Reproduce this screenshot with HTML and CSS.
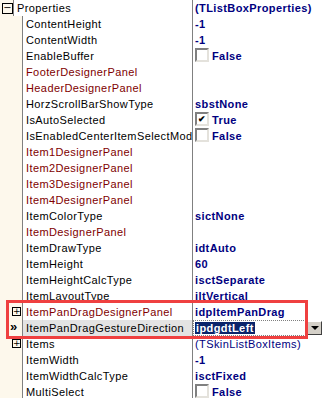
FILE: index.html
```html
<!DOCTYPE html>
<html lang="en">
<head>
    <meta charset="UTF-8">
    <title>Object Inspector</title>
    <link rel="stylesheet" href="styles.css">
</head>
<body>

<div class="inspector">
    <div class="row">
        <div class="gutter top">
            <span class="box big">&minus;</span>
        </div>
        <div class="name first">Properties</div>
        <div class="value">(TListBoxProperties)</div>
    </div>
    <div class="row"><div class="gutter"></div><div class="name">ContentHeight</div><div class="value">-1</div></div>
    <div class="row"><div class="gutter"></div><div class="name">ContentWidth</div><div class="value">-1</div></div>
    <div class="row"><div class="gutter"></div><div class="name">EnableBuffer</div><div class="value"><span class="check"></span>False</div></div>
    <div class="row"><div class="gutter"></div><div class="name ref">FooterDesignerPanel</div><div class="value"></div></div>
    <div class="row"><div class="gutter"></div><div class="name ref">HeaderDesignerPanel</div><div class="value"></div></div>
    <div class="row"><div class="gutter"></div><div class="name">HorzScrollBarShowType</div><div class="value">sbstNone</div></div>
    <div class="row"><div class="gutter"></div><div class="name">IsAutoSelected</div><div class="value"><span class="check on">&#10004;</span>True</div></div>
    <div class="row"><div class="gutter"></div><div class="name">IsEnabledCenterItemSelectMode</div><div class="value"><span class="check"></span>False</div></div>
    <div class="row"><div class="gutter"></div><div class="name ref">Item1DesignerPanel</div><div class="value"></div></div>
    <div class="row"><div class="gutter"></div><div class="name ref">Item2DesignerPanel</div><div class="value"></div></div>
    <div class="row"><div class="gutter"></div><div class="name ref">Item3DesignerPanel</div><div class="value"></div></div>
    <div class="row"><div class="gutter"></div><div class="name ref">Item4DesignerPanel</div><div class="value"></div></div>
    <div class="row"><div class="gutter"></div><div class="name">ItemColorType</div><div class="value">sictNone</div></div>
    <div class="row"><div class="gutter"></div><div class="name ref">ItemDesignerPanel</div><div class="value"></div></div>
    <div class="row"><div class="gutter"></div><div class="name">ItemDrawType</div><div class="value">idtAuto</div></div>
    <div class="row"><div class="gutter"></div><div class="name">ItemHeight</div><div class="value">60</div></div>
    <div class="row"><div class="gutter"></div><div class="name">ItemHeightCalcType</div><div class="value">isctSeparate</div></div>
    <div class="row"><div class="gutter"></div><div class="name">ItemLayoutType</div><div class="value">iltVertical</div></div>
    <div class="row"><div class="gutter"><span class="box">+</span></div><div class="name ref">ItemPanDragDesignerPanel</div><div class="value">idpItemPanDrag</div></div>
    <div class="row selected">
        <div class="gutter"><span class="arrow">&raquo;</span></div>
        <div class="name">ItemPanDragGestureDirection</div>
        <div class="value editing">
            <span class="editor"><span class="sel">ipdgdtLeft</span></span>
            <span class="drop"></span>
        </div>
    </div>
    <div class="row"><div class="gutter"><span class="box">+</span></div><div class="name">Items</div><div class="value plain">(TSkinListBoxItems)</div></div>
    <div class="row"><div class="gutter"></div><div class="name">ItemWidth</div><div class="value">-1</div></div>
    <div class="row"><div class="gutter"></div><div class="name">ItemWidthCalcType</div><div class="value">isctFixed</div></div>
    <div class="row"><div class="gutter"></div><div class="name">MultiSelect</div><div class="value"><span class="check"></span>False</div></div>

    <div class="highlight"></div>
</div>

</body>
</html>
```

FILE: styles.css
```css
body {
    margin: 0;
    background-color: #fff;
    font-family: "Liberation Sans", Arial, sans-serif;
    font-size: 11px;
    letter-spacing: 0.4px;
}

.inspector {
    position: relative;
    width: 326px;
    height: 398px;
    overflow: hidden;
}

.row {
    display: flex;
    height: 16px;
    line-height: 16px;
}

.gutter {
    position: relative;
    width: 22px;
    flex-shrink: 0;
    background-color: #fdf8ec;
    border-right: 1px solid #808080;
}

.gutter.top {
    width: 13px;
}

.name {
    width: 166px;
    padding-left: 3px;
    flex-shrink: 0;
    color: #000;
    white-space: nowrap;
    overflow: hidden;
    border-right: 1px solid #808080;
}

.name.first {
    width: 175px;
}

.name.ref {
    color: #800000;
}

.value {
    flex: 1;
    padding-left: 2px;
    color: #000080;
    font-weight: bold;
    white-space: nowrap;
    display: flex;
    align-items: center;
}

.value.plain {
    font-weight: normal;
}

.box {
    position: absolute;
    top: 3px;
    left: 12px;
    width: 7px;
    height: 7px;
    border: 1px solid #000;
    font-size: 9px;
    line-height: 6px;
    text-align: center;
    letter-spacing: 0;
    font-family: "DejaVu Sans", sans-serif;
    color: #000;
    background-color: #fdf8ec;
}

.box.big {
    left: 2px;
    top: 3px;
    width: 9px;
    height: 9px;
    line-height: 8px;
    font-size: 10px;
}

.arrow {
    position: absolute;
    left: 10px;
    top: -1px;
    font-weight: bold;
    font-size: 13px;
}

.check {
    display: inline-block;
    width: 10px;
    height: 10px;
    margin-right: 3px;
    margin-top: -2px;
    border: 2px solid;
    border-color: #808080 #e4e2dc #e4e2dc #808080;
    background-color: #fff;
    color: #000;
    font-size: 9px;
    line-height: 10px;
    text-align: center;
    letter-spacing: 0;
}

.selected .name {
    background-color: #e3e3e3;
}

.value.editing {
    padding-left: 0;
    padding-right: 4px;
}

.editor {
    flex: 1;
    height: 14px;
    line-height: 14px;
    border: 1px dotted #808080;
    padding-left: 1px;
}

.sel {
    background-color: #0a246a;
    color: #fff;
    padding: 0 1px;
}

.drop {
    position: relative;
    width: 15px;
    height: 14px;
    margin-left: 1px;
    background-color: #d4d0c8;
    border: 1px solid;
    border-color: #fff #404040 #404040 #fff;
    box-sizing: border-box;
}

.drop::after {
    content: "";
    position: absolute;
    left: 3px;
    top: 4px;
    border-left: 4px solid transparent;
    border-right: 4px solid transparent;
    border-top: 4px solid #000;
}

.highlight {
    position: absolute;
    left: 6px;
    top: 300px;
    width: 296px;
    height: 33px;
    border: 3px solid #ef4040;
}
```
